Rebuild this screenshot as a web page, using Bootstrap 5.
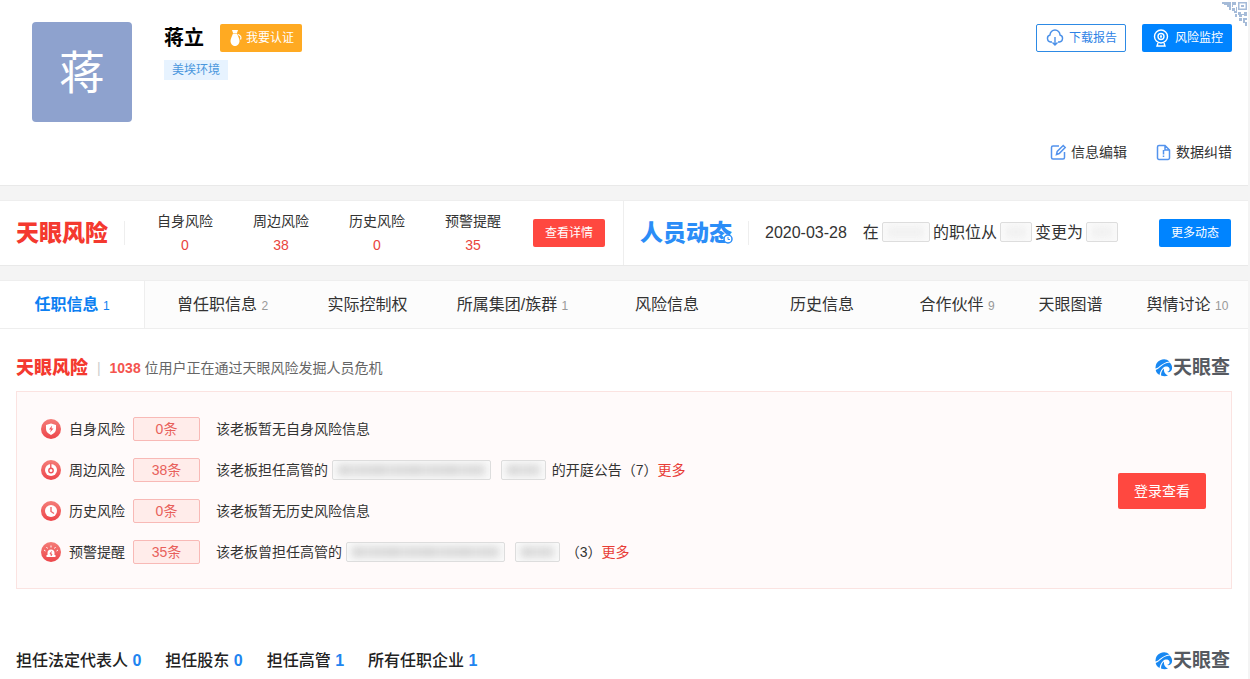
<!DOCTYPE html>
<html lang="zh-CN">
<head>
<meta charset="utf-8">
<meta name="viewport" content="width=device-width, initial-scale=1">
<title>蒋立 - 天眼查</title>
<link rel="stylesheet" href="https://cdn.jsdelivr.net/npm/bootstrap@5.3.0/dist/css/bootstrap.min.css">
<style>
:root{--tyc-blue:#0084ff;--tyc-red:#ff4840;--tyc-text:#333}
body{font-family:"Liberation Sans","Noto Sans CJK SC",sans-serif;font-size:14px;line-height:20px;color:var(--tyc-text);background:#f4f4f4}
a{text-decoration:none;color:inherit}
.page{min-height:100vh;margin-right:2px}
.panel{background:#fff}
.profile{padding:22px 16px 23px 32px;border-bottom:1px solid #e9e9e9;position:relative}
.profile-info,.profile-tools{padding-top:2px}
.avatar{width:100px;height:100px;border-radius:4px;background:#8ea2ce;color:#fff;font-size:46px;line-height:102px;text-align:center}
.person{font-size:20px;line-height:30px;font-weight:700;color:#000}
.name-row{height:28px}
.tagged{font-size:12px;line-height:20px;padding:0 8px;background:#e7f3ff;color:#4a97dd}
.btn-tyc{height:28px;padding:0 11px;border:1px solid transparent;border-radius:2px;font-size:12px;line-height:26px;color:#fff;white-space:nowrap;display:inline-flex;align-items:center}
.btn-tyc:hover{color:#fff;opacity:.9}
.btn-orange{background:#ffaa22;padding:0 7px 0 8px}
.btn-blue{background:var(--tyc-blue)}
.btn-red{background:var(--tyc-red)}
.btn-wire,.btn-wire:hover{background:#fff;border-color:#2d8ae5;color:#2d82e5}
.btn-icon{width:90px;padding:0 8px 0 9px;justify-content:space-between}
.btn-login{height:36px;padding:0 15px;font-size:14px;color:#fff}
.qr{position:absolute;top:2px;right:1px}
.profile-tools{gap:90px}
.strip{margin-top:14px;border-top:1px solid #eee;border-bottom:1px solid #e9e9e9}
.strip-half{height:64px;padding:0 18px 0 16px}
.strip-half + .strip-half{border-left:1px solid #eee;padding-right:17px}
.wordmark{font-size:23px;line-height:28px;font-weight:900;white-space:nowrap;position:relative}
.wordmark-sm{font-size:18px;line-height:24px}
.wordmark .clock{position:absolute;right:-1px;bottom:3px}
.red-ink{color:#f4392f}
.blue-ink{color:#2b8df7}
.rule{width:1px;height:24px;background:#eee}
.stat{width:96px;text-align:center}
.stat b{display:block;font-weight:400;color:#e9443d;line-height:20px;margin-top:4px}
.detail{margin-left:12px}
.feed{font-size:16px;line-height:24px;white-space:nowrap}
.masked{display:inline-block;height:20px;border:1px solid #ddd;border-radius:2px;background:#fafafa;overflow:hidden;vertical-align:-5px}
.masked::before{content:"";display:block;height:10px;margin:4px 5px;background:repeating-linear-gradient(90deg,#d2d2d2 0 12px,#dedede 12px 17px,#d6d6d6 17px 36px);filter:blur(4px)}
.masked.pale{margin:0 3px;vertical-align:-4px}
.masked.pale::before{background:#efefef}
.w-32{width:32px}.w-45{width:45px;margin:0 2px 0 6px}.w-48{width:48px}.w-159{width:159px}
.tabs{display:grid;grid-template-columns:145fr 155fr 135fr 155fr 154fr 156fr 114fr 113fr 121fr;margin-top:14px;border-top:1px solid #eee;border-bottom:1px solid #eee;background:#fcfcfc}
.tabs a{font-size:16px;height:47px;line-height:48px;text-align:center;white-space:nowrap}
.tabs small{font-size:12px;line-height:20px;color:#999}
.tabs .current{background:#fff;border-right:1px solid #eee;color:#0c7ff2;font-weight:700}
.tabs .current small{color:inherit;font-weight:400}
.main{padding:27px 16px 6px}
.found{color:#666}
.found b{color:#f4544e}
.bar{color:#ccc;margin:0 5px 0 1px}
.risk-box{margin-top:11px;padding:25px 25px 24px 24px;border:1px solid #fbe3e1;background:#fffafa}
.risk-list{display:grid;row-gap:17px}
.risk-line{height:24px;white-space:nowrap}
.risk-line span{line-height:20px}
.risk-line .count{width:67px;height:24px;border:1px solid #f8b9b6;border-radius:2px;background:#ffecea;color:#e8605b;line-height:22px;text-align:center}
.more{color:#e83c36}
.sections{font-size:16px;line-height:24px;font-weight:500;gap:24px;color:#222}
.sections b{color:#2184f0}
.brand{color:#565a61;font-size:19px;line-height:24px;font-weight:700;padding-right:2px}
.row-end{margin-top:60px}
</style>
</head>
<body>
<svg class="position-absolute" width="0" height="0" aria-hidden="true">
  <symbol id="brand-eye" viewBox="0 0 18 18"><path d="M14.500 2.500A8.500 8.500 0 0 0 .5 9.500C5 8.500 6.500 3.500 14.500 2.500Z" fill="#1888f2"/><path d="M.7 11C5.500 9 7 4.500 14.500 3.500c2 1.500 3 4 2.500 6.500-.5 2.500-2.500 3.500-5 3 2-.5 3-2 2.500-3.500C13.500 7 10 7 8 9c-2 2-3 4-3.500 7C2.500 15 1 13 .7 11Z" fill="#1888f2"/><path d="M9 9.500c-2 1.500-3 4-3 7 2.500 1 5 1 7 0-2.500-1-4.500-3.500-4-7Z" fill="#1888f2"/></symbol>
  <linearGradient id="rose" x1="0" y1="0" x2="0" y2="1"><stop stop-color="#f47d78"/><stop offset="1" stop-color="#ed464b"/></linearGradient>
</svg>
<div class="page d-flex flex-column">
  <header class="panel profile d-flex">
    <div class="avatar">蒋</div>
    <div class="profile-info ms-4 ps-2 flex-grow-1">
      <div class="name-row d-flex align-items-center gap-3">
        <h1 class="person m-0">蒋立</h1>
        <button type="button" class="btn btn-tyc btn-orange gap-1"><svg width="13" height="18" viewBox="2 0 13 18" fill="#fff"><path d="M5 1h6L10 4H6Z"/><path d="M6 4.500h4c1 3 2.500 5 2.500 7.500C12.500 15 10 17 8 17s-4.500-2-4.500-5C3.500 9.500 5 7.500 6 4.500Z"/><path d="M11 5.500c3 1 3.500 3 2.500 5" fill="none" stroke="#fff" stroke-width="1.200"/></svg>我要认证</button>
      </div>
      <a href="#" class="tagged d-inline-block mt-2">美埃环境</a>
    </div>
    <div class="profile-tools d-flex flex-column align-items-end">
      <div class="d-flex gap-3">
        <button type="button" class="btn btn-tyc btn-wire btn-icon"><svg width="18" height="18" viewBox="0 0 18 18" fill="none" stroke="#4a90e8" stroke-width="1.400"><path d="M6 13H4.500a3.600 3.600 0 0 1-.5-7 5 5 0 0 1 10 0 3.600 3.600 0 0 1-.5 7H12M9 8v8M6.500 13.500L9 16l2.500-2.500"/></svg>下载报告</button>
        <button type="button" class="btn btn-tyc btn-blue btn-icon"><svg width="18" height="18" viewBox="0 0 18 18" fill="none" stroke="#fff" stroke-width="1.400"><circle cx="9" cy="7.500" r="6.500"/><circle cx="9" cy="7.500" r="3"/><circle cx="9" cy="7.500" r=".5"/><path d="M6 14l-1 3h8l-1-3"/></svg>风险监控</button>
      </div>
      <div class="d-flex gap-4">
        <a href="#" class="d-flex align-items-center me-1"><svg class="me-1" width="17" height="17" viewBox="0 0 17 17" fill="none" stroke="#5393ed" stroke-width="1.500"><path d="M9 2H3a1.500 1.500 0 0 0-1.500 1.500v10A1.500 1.500 0 0 0 3 15h10a1.500 1.500 0 0 0 1.500-1.500V8M6.500 10.500l.7-3 6-6 2 2-6 6Z"/></svg>信息编辑</a>
        <a href="#" class="d-flex align-items-center"><svg class="me-1" width="17" height="17" viewBox="0 0 17 17" fill="none" stroke="#5393ed" stroke-width="1.500"><path d="M4 1.500h6l4.500 4.500v8a1.500 1.500 0 0 1-1.500 1.500H4A1.500 1.500 0 0 1 2.500 14V3A1.500 1.500 0 0 1 4 1.500ZM10 1.500V6h4.500M8.500 6v4.500M8.500 11.500V13"/></svg>数据纠错</a>
      </div>
    </div>
    <svg class="qr" width="25" height="24" viewBox="0 0 25 24" fill="#a5bbd8"><path d="M0 0h9v8H7V5H5V3H2V2H0ZM10 0h4v3h-3v2h-1ZM16 0h9v8h-9ZM10 6h3v3h-3ZM14 5h1v6h-3v-2h2ZM16 10h3v2h3v-2h3v4h-3v-1h-2v2h-3v-2h-1ZM13 12h2v3h-2ZM17 16h3v3h-3ZM21 16h4v2h-2v2h2v4h-2v-3h-2Z"/><path d="M17.500 1.500h6v5h-6Z" fill="#fff"/><path d="M19 3h3v2h-3Z"/></svg>
  </header>

  <section class="panel strip d-flex">
    <div class="strip-half d-flex align-items-center">
      <div class="wordmark red-ink">天眼风险</div>
      <div class="rule ms-3 me-2"></div>
      <div class="d-flex ms-1">
        <div class="stat">自身风险<b>0</b></div>
        <div class="stat">周边风险<b>38</b></div>
        <div class="stat">历史风险<b>0</b></div>
        <div class="stat">预警提醒<b>35</b></div>
      </div>
      <button type="button" class="btn btn-tyc btn-red detail">查看详情</button>
    </div>
    <div class="strip-half d-flex align-items-center flex-grow-1">
      <div class="wordmark blue-ink">人员动态<svg class="clock" width="10" height="10" viewBox="0 0 10 10"><circle cx="5" cy="5" r="4" fill="#fff" stroke="#2b8df7" stroke-width="1.500"/><path d="M5 3v2.500h2" fill="none" stroke="#2b8df7"/></svg></div>
      <div class="rule mx-3"></div>
      <div class="feed"><span class="me-3">2020-03-28</span>在<span class="masked pale w-48"></span>的职位从<span class="masked pale w-32"></span>变更为<span class="masked pale w-32"></span></div>
      <button type="button" class="btn btn-tyc btn-blue ms-auto">更多动态</button>
    </div>
  </section>

  <nav class="tabs">
    <a href="#" class="current">任职信息 <small>1</small></a>
    <a href="#">曾任职信息 <small>2</small></a>
    <a href="#">实际控制权</a>
    <a href="#">所属集团/族群 <small>1</small></a>
    <a href="#">风险信息</a>
    <a href="#">历史信息</a>
    <a href="#">合作伙伴 <small>9</small></a>
    <a href="#">天眼图谱</a>
    <a href="#">舆情讨论 <small>10</small></a>
  </nav>

  <main class="panel main flex-grow-1">
    <div class="d-flex align-items-center">
      <div class="wordmark wordmark-sm red-ink">天眼风险</div>
      <div class="found ms-2"><span class="bar">|</span> <b>1038</b> 位用户正在通过天眼风险发掘人员危机</div>
      <div class="brand d-flex align-items-center ms-auto"><svg width="18" height="18"><use href="#brand-eye"/></svg>天眼查</div>
    </div>
    <div class="risk-box d-flex align-items-center justify-content-between">
      <div class="risk-list">
        <div class="risk-line d-flex align-items-center gap-2">
          <svg width="20" height="20"><circle cx="10" cy="10" r="10" fill="url(#rose)"/><path d="M10 4.500l5 1.500v4c0 3-2 4.500-5 6-3-1.500-5-3-5-6V6Z" fill="#fff"/><path d="M11 6.500L8 10.500h2l-1 3 3.500-4h-2Z" fill="#f0555a"/></svg>
          <span>自身风险</span><span class="count">0条</span><span class="ms-2">该老板暂无自身风险信息</span>
        </div>
        <div class="risk-line d-flex align-items-center gap-2">
          <svg width="20" height="20"><circle cx="10" cy="10" r="10" fill="url(#rose)"/><circle cx="10" cy="10" r="6" fill="#fff"/><path d="M9 3h1.500v6H9Z" fill="#f0666a"/><circle cx="10" cy="10.500" r="2.200" fill="none" stroke="#f0555a" stroke-width="1.400"/></svg>
          <span>周边风险</span><span class="count">38条</span><span class="ms-2">该老板担任高管的 <span class="masked w-159"></span> <span class="masked w-45"></span> 的开庭公告（7）<a href="#" class="more">更多</a></span>
        </div>
        <div class="risk-line d-flex align-items-center gap-2">
          <svg width="20" height="20"><circle cx="10" cy="10" r="10" fill="url(#rose)"/><circle cx="10" cy="10" r="6" fill="#fff"/><path d="M10 6v4.500l3 2" fill="none" stroke="#ef686b" stroke-width="1.400"/></svg>
          <span>历史风险</span><span class="count">0条</span><span class="ms-2">该老板暂无历史风险信息</span>
        </div>
        <div class="risk-line d-flex align-items-center gap-2">
          <svg width="20" height="20"><circle cx="10" cy="10" r="10" fill="url(#rose)"/><path d="M6.500 13v-2a3.500 3.500 0 0 1 7 0v2h1v2h-9v-2Z" fill="#fff"/><path d="M10 5.500V3.500M6.500 6.500l-1-1.500M13.500 6.500l1-1.500M4.500 9L3 8M15.500 9L17 8" stroke="#fff"/><path d="M10.500 9.500L9 12h2l-1 2" fill="none" stroke="#ee555a"/></svg>
          <span>预警提醒</span><span class="count">35条</span><span class="ms-2">该老板曾担任高管的 <span class="masked w-159"></span> <span class="masked w-45"></span> （3）<a href="#" class="more">更多</a></span>
        </div>
      </div>
      <button type="button" class="btn btn-tyc btn-red btn-login">登录查看</button>
    </div>
    <div class="row-end d-flex align-items-center">
      <div class="sections d-flex"><span>担任法定代表人 <b>0</b></span><span>担任股东 <b>0</b></span><span>担任高管 <b>1</b></span><span>所有任职企业 <b>1</b></span></div>
      <div class="brand d-flex align-items-center ms-auto"><svg width="18" height="18"><use href="#brand-eye"/></svg>天眼查</div>
    </div>
  </main>
</div>
<script src="https://cdn.jsdelivr.net/npm/bootstrap@5.3.0/dist/js/bootstrap.bundle.min.js"></script>
</body>
</html>
